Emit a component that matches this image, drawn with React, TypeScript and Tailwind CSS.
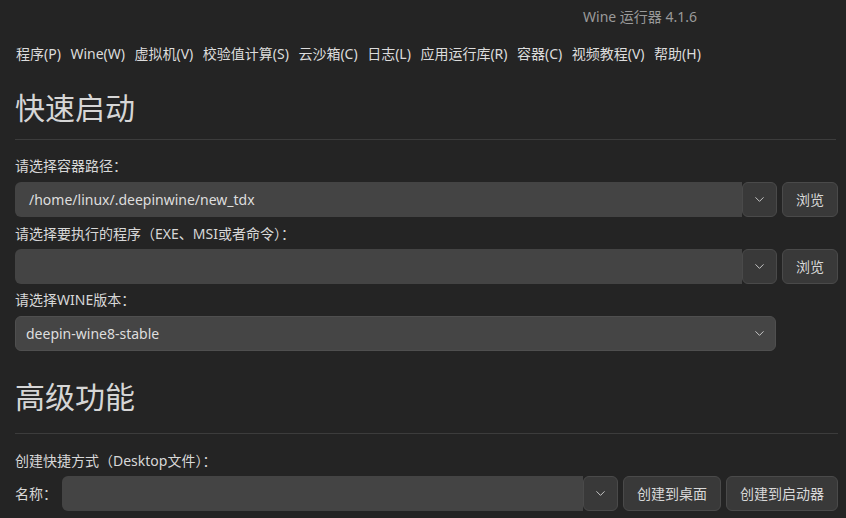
import { ChevronDown } from "lucide-react"

const font = { fontFamily: '"Noto Sans", "Noto Sans CJK SC", sans-serif' }

const menus = ["程序(P)", "Wine(W)", "虚拟机(V)", "校验值计算(S)", "云沙箱(C)", "日志(L)", "应用运行库(R)", "容器(C)", "视频教程(V)", "帮助(H)"]

function DropBtn() {
  return (
    <div className="w-[35px] h-[35px] shrink-0 flex items-center justify-center rounded-[6px] bg-[#393939] border border-[#4a4a4a]">
      <ChevronDown className="w-[15px] h-[15px] text-[#cfcfcf]" strokeWidth={1.5} />
    </div>
  )
}

function Btn({ children, w }: { children: React.ReactNode; w: string }) {
  return (
    <div className={`${w} h-[35px] shrink-0 flex items-center justify-center rounded-[6px] bg-[#393939] border border-[#4a4a4a] text-[14px] text-[#d8d8d8]`}>
      {children}
    </div>
  )
}

function Heading({ children }: { children: React.ReactNode }) {
  return <div className="text-[30px] leading-[40px] text-[#d6d6d6]">{children}</div>
}

export default function App() {
  return (
    <div className="w-[846px] h-[518px] bg-[#242424] text-[#d8d8d8] overflow-hidden" style={font}>
      <div className="h-[32px] flex items-center pl-[583px] text-[14px] text-[#9a9a9a]">Wine 运行器 4.1.6</div>
      <div className="h-[42px] flex items-center gap-[9.5px] pl-[16px] text-[14px] text-[#dcdcdc]">
        {menus.map((m) => (
          <span key={m}>{m}</span>
        ))}
      </div>
      <div className="pl-[15px] pr-[8px]">
        <div className="pt-[14px]">
          <Heading>快速启动</Heading>
        </div>
        <div className="mt-[11px] h-px bg-[#3c3c3c] mr-[2px]" />
        <div className="mt-[16px] text-[14px] leading-[20px]">请选择容器路径：</div>
        <div className="mt-[6px] flex gap-[5px]">
          <div className="flex-1 flex">
            <div className="flex-1 h-[35px] flex items-center rounded-l-[6px] bg-[#444444] pl-[14px] text-[14px] text-[#dedede]">
              /home/linux/.deepinwine/new_tdx
            </div>
            <DropBtn />
          </div>
          <Btn w="w-[56px]">浏览</Btn>
        </div>
        <div className="mt-[7px] text-[14px] leading-[20px]">请选择要执行的程序（EXE、MSI或者命令）：</div>
        <div className="mt-[5px] flex gap-[5px]">
          <div className="flex-1 flex">
            <div className="flex-1 h-[35px] rounded-l-[6px] bg-[#444444]" />
            <DropBtn />
          </div>
          <Btn w="w-[56px]">浏览</Btn>
        </div>
        <div className="mt-[6px] text-[14px] leading-[20px]">请选择WINE版本：</div>
        <div className="mt-[6px] w-[761px] h-[35px] flex items-center justify-between rounded-[6px] bg-[#454545] border border-[#4f4f4f] pl-[10px] pr-[8px] text-[14px] text-[#dedede]">
          <span>deepin-wine8-stable</span>
          <ChevronDown className="w-[15px] h-[15px] text-[#cfcfcf]" strokeWidth={1.5} />
        </div>
        <div className="pt-[26px]">
          <Heading>高级功能</Heading>
        </div>
        <div className="mt-[16px] h-px bg-[#3c3c3c]" />
        <div className="mt-[17px] text-[14px] leading-[20px]">创建快捷方式（Desktop文件）：</div>
        <div className="mt-[5px] flex items-center gap-[5px]">
          <span className="w-[42px] text-[14px]">名称：</span>
          <div className="flex-1 flex">
            <div className="flex-1 h-[35px] rounded-l-[6px] bg-[#444444]" />
            <DropBtn />
          </div>
          <Btn w="w-[98px]">创建到桌面</Btn>
          <Btn w="w-[112px]">创建到启动器</Btn>
        </div>
      </div>
    </div>
  )
}
